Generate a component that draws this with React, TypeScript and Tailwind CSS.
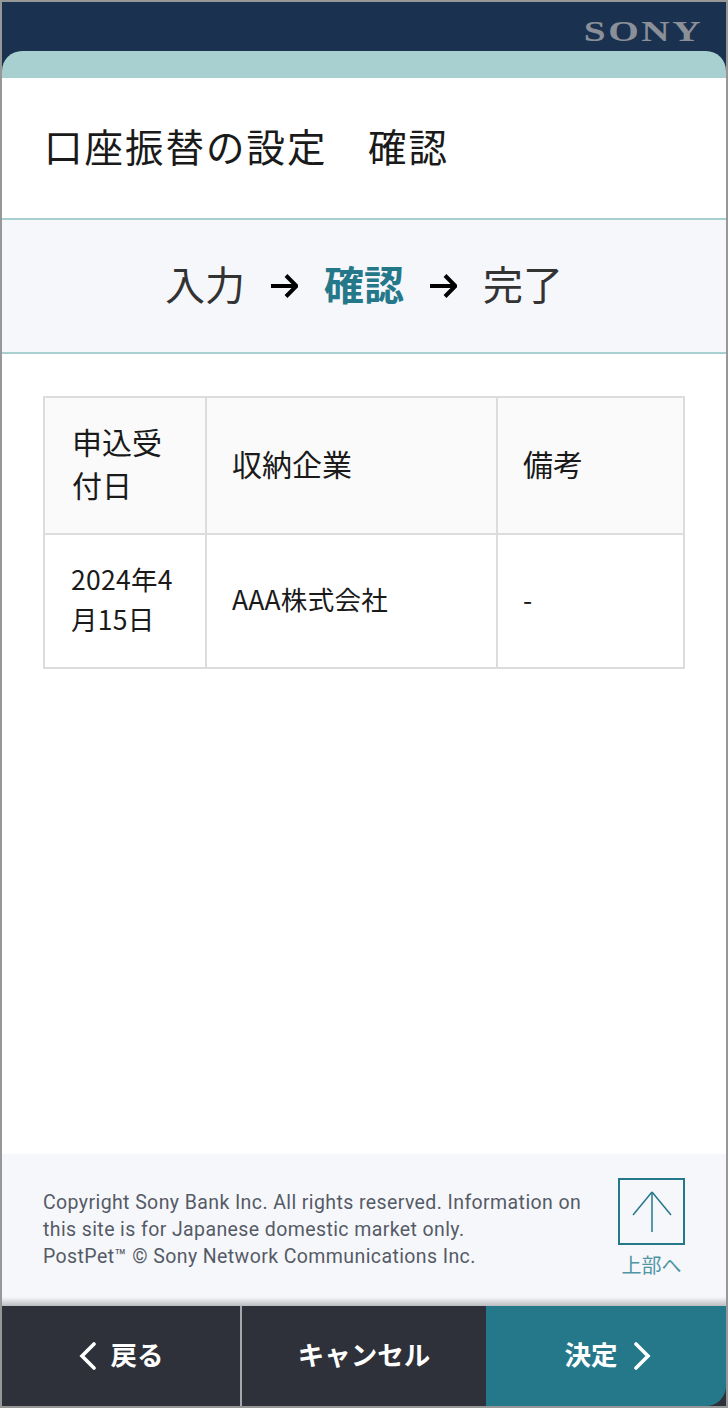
const font = { fontFamily: "'Noto Sans CJK JP', 'Noto Sans', sans-serif" };

function StepArrow() {
  return (
    <svg width="27" height="26" viewBox="0 0 27 26" fill="none" stroke="#000" strokeWidth="4" className="mx-[26px] shrink-0">
      <path d="M0 13h25" />
      <path d="M15 2.5L25.5 13 15 23.5" />
    </svg>
  );
}

function Chevron({ dir }: { dir: "left" | "right" }) {
  return (
    <svg width="18" height="28" viewBox="0 0 18 28" fill="none" stroke="#fff" strokeWidth="3.6" strokeLinecap="round">
      <path d={dir === "left" ? "M15 2L3 14l12 12" : "M3 2l12 12L3 26"} />
    </svg>
  );
}

export default function App() {
  return (
    <div className="w-[728px] h-[1408px] border-2 border-[#979797] bg-[#1a3150] flex flex-col overflow-hidden" style={font}>
      {/* ヘッダー */}
      <header className="h-[49px] shrink-0 flex items-center justify-end pr-[23px] pt-[8px]">
        <span
          className="text-[30px] leading-none font-bold text-[#8b8f98] tracking-[2px] scale-x-[1.31] origin-right"
          style={{ fontFamily: "'Liberation Serif', serif" }}
        >
          SONY
        </span>
      </header>

      <div className="h-[27px] shrink-0 bg-[#a8d0d0] rounded-t-[20px]" />

      <main className="flex-1 bg-white flex flex-col">
        <h1 className="h-[142px] shrink-0 flex items-center pl-[42px] pb-[4px] text-[38.5px] text-[#1a1a1a] tracking-[2px] border-b-2 border-[#a8d0d0]">
          口座振替の設定　確認
        </h1>

        {/* ステップ */}
        <div className="h-[134px] shrink-0 bg-[#f6f7fb] border-b-2 border-[#a8d0d0] flex items-center justify-center text-[40px] text-[#333]">
          <span className="-mt-[6px]">入力</span>
          <StepArrow />
          <span className="-mt-[6px] font-bold text-[#25788a]">確認</span>
          <StepArrow />
          <span className="-mt-[6px]">完了</span>
        </div>

        <div className="px-[41px] pt-[42px]">
          <table className="w-[640px] table-fixed border-collapse text-[#1a1a1a]">
            <colgroup>
              <col className="w-[162px]" />
              <col className="w-[291px]" />
              <col className="w-[187px]" />
            </colgroup>
            <thead>
              <tr className="h-[137px] bg-[#fafafa] text-[30px] leading-[43px] text-left">
                <th className="border-2 border-[#dcdcdc] pl-[27px] pr-[24px] pb-[5px] font-normal">申込受付日</th>
                <th className="border-2 border-[#dcdcdc] pl-[25px] pb-[5px] font-normal">収納企業</th>
                <th className="border-2 border-[#dcdcdc] pl-[25px] pb-[5px] font-normal">備考</th>
              </tr>
            </thead>
            <tbody>
              <tr className="h-[134px] text-[26.5px] leading-[40px] tracking-[0.3px]">
                <td className="border-2 border-[#dcdcdc] pl-[26px] pr-[18px] pb-[5px] break-all">2024年4月15日</td>
                <td className="border-2 border-[#dcdcdc] pl-[25px] pb-[5px]">AAA株式会社</td>
                <td className="border-2 border-[#dcdcdc] pl-[25px] pb-[5px]">-</td>
              </tr>
            </tbody>
          </table>
        </div>
      </main>

      {/* フッター */}
      <footer className="h-[152px] shrink-0 bg-[#f6f7fb] flex justify-between pl-[41px] pr-[41px] pt-[24px] relative">
        <p
          className="w-[545px] pt-[11px] text-[19.5px] leading-[27px] text-[#555b66] tracking-[0.4px]"
          style={{ fontFamily: "Roboto, 'Noto Sans', sans-serif" }}
        >
          Copyright Sony Bank Inc. All rights reserved. Information on this site is for Japanese domestic market only.
          <br />
          PostPet™ © Sony Network Communications Inc.
        </p>
        <div className="flex flex-col items-center w-[67px]">
          <div className="w-[67px] h-[67px] shrink-0 border-2 border-[#25788a] flex items-center justify-center">
            <svg width="40" height="42" viewBox="0 0 40 42" fill="none" stroke="#25788a" strokeWidth="1.5">
              <path d="M20 1v40" />
              <path d="M20 1L1 24M20 1l19 23" />
            </svg>
          </div>
          <span className="mt-[6px] text-[20px] leading-[28px] whitespace-nowrap text-[#4f95a3]">上部へ</span>
        </div>
        <div className="absolute left-0 right-0 bottom-0 h-[9px] bg-gradient-to-b from-transparent to-[#bcbdc1]" />
      </footer>

      {/* ボタン */}
      <nav className="h-[100px] shrink-0 flex bg-[#2e3139] text-white font-bold text-[26.5px]">
        <button className="w-[240px] flex items-center justify-center gap-[14px] border-r-2 border-[#a6a8ac] rounded-bl-[20px]">
          <Chevron dir="left" />
          <span className="-mt-[4px]">戻る</span>
        </button>
        <button className="w-[244px] flex items-center justify-center pb-[4px]">キャンセル</button>
        <button className="flex-1 flex items-center justify-center gap-[15px] pl-[3px] bg-[#25788a] rounded-br-[20px]">
          <span className="-mt-[4px]">決定</span>
          <Chevron dir="right" />
        </button>
      </nav>
    </div>
  );
}
